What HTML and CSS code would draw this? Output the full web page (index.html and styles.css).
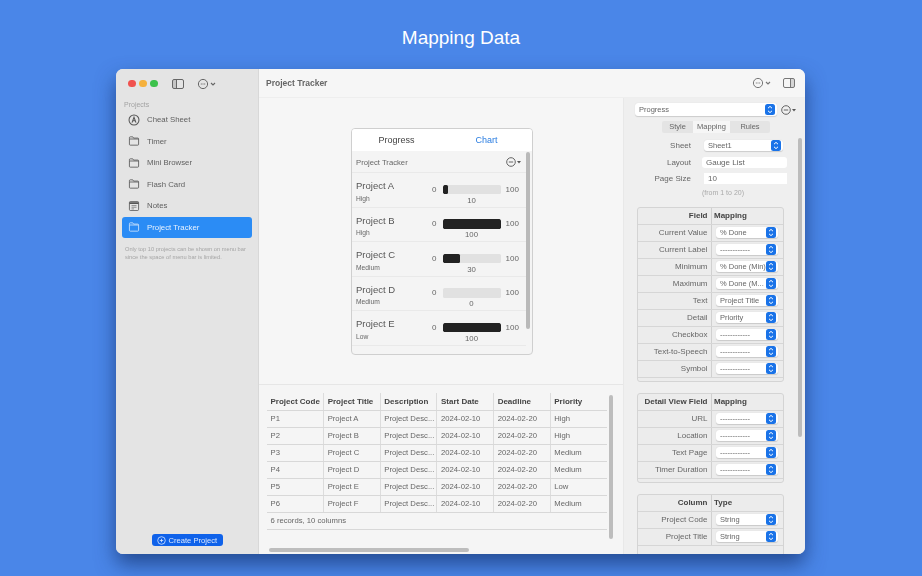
FILE: index.html
```html
<!DOCTYPE html>
<html lang="en">
<head>
<meta charset="utf-8">
<title>Mapping Data</title>
<link rel="stylesheet" href="styles.css">
</head>
<body>
<svg class="defs" width="0" height="0" aria-hidden="true">
  <symbol id="folder" viewBox="0 0 14 12"><path d="M1.500 3V2a1 1 0 0 1 1-1h3l1 1.500h5a1 1 0 0 1 1 1V10a1 1 0 0 1-1 1h-9a1 1 0 0 1-1-1z M1.500 3.600h11" fill="none" stroke="currentColor" stroke-width="1"/></symbol>
  <symbol id="more" viewBox="0 0 20 12"><circle cx="6" cy="6" r="4.600" fill="none" stroke="currentColor"/><path d="M3.800 6h4.400" stroke="currentColor" stroke-dasharray="1 .7"/><path d="M14 5l2 2 2-2" fill="none" stroke="currentColor" stroke-width="1.100"/></symbol>
  <symbol id="more-s" viewBox="0 0 16 10"><circle cx="5" cy="5" r="4.300" fill="none" stroke="currentColor" stroke-width=".9"/><path d="M2.800 5h4.400" stroke="currentColor" stroke-width=".9"/><path d="M11 4h4l-2 2.400z" fill="currentColor"/></symbol>
  <symbol id="updown" viewBox="0 0 10 11"><rect width="10" height="11" rx="2.500" fill="#1a73e8"/><path d="M3 4.200 5 2.400l2 1.800M3 6.800l2 1.800 2-1.800" fill="none" stroke="#fff" stroke-width="1"/></symbol>
</svg>

<h1 class="title">Mapping Data</h1>

<main class="window">
  <aside class="sidebar">
    <div class="traffic">
      <span class="light red"></span><span class="light yellow"></span><span class="light green"></span>
      <svg class="side-toggle" width="12" height="10" viewBox="0 0 12 10"><rect x=".5" y=".5" width="11" height="9" rx="1.500" fill="none" stroke="currentColor"/><path d="M4.500 .5v9" stroke="currentColor"/><path d="M1 1h3.500v8H1z" fill="currentColor" opacity=".25"/></svg>
      <svg class="side-more" width="20" height="12"><use href="#more"/></svg>
    </div>
    <div class="side-label">Projects</div>
    <nav class="side-list">
      <a class="side-item"><svg class="side-icon" width="12" height="12" viewBox="0 0 14 14"><circle cx="7" cy="7" r="5.800" fill="none" stroke="currentColor" stroke-width="1.200"/><path d="M4.700 10 7 3.800 9.300 10M5.500 8h3" fill="none" stroke="currentColor" stroke-width="1.200"/></svg>Cheat Sheet</a>
      <a class="side-item"><svg class="side-icon" width="12" height="10"><use href="#folder"/></svg>Timer</a>
      <a class="side-item"><svg class="side-icon" width="12" height="10"><use href="#folder"/></svg>Mini Browser</a>
      <a class="side-item"><svg class="side-icon" width="12" height="10"><use href="#folder"/></svg>Flash Card</a>
      <a class="side-item"><svg class="side-icon" width="12" height="10" viewBox="0 0 14 12"><rect x="1.500" y=".5" width="11" height="11" rx="1.500" fill="none" stroke="currentColor"/><path d="M1.500 2.500h11" stroke="currentColor" stroke-width="2"/><path d="M4 5.500h6M4 7.500h6M4 9.500h3" stroke="currentColor" stroke-width=".7"/></svg>Notes</a>
      <a class="side-item active"><svg class="side-icon" width="12" height="10"><use href="#folder"/></svg>Project Tracker</a>
    </nav>
    <p class="side-note">Only top 10 projects can be shown on menu bar since the space of menu bar is limited.</p>
    <button class="create"><svg width="9" height="9" viewBox="0 0 9 9"><circle cx="4.500" cy="4.500" r="3.800" fill="none" stroke="currentColor" stroke-width=".8"/><path d="M4.500 2.800v3.400M2.800 4.500h3.400" stroke="currentColor" stroke-width=".8"/></svg>Create Project</button>
  </aside>

  <div class="content">
    <header class="toolbar">
      <span class="doc-title">Project Tracker</span>
      <svg class="tool-more" width="20" height="12"><use href="#more"/></svg>
      <svg class="tool-panel" width="12" height="10" viewBox="0 0 12 10"><rect x=".5" y=".5" width="11" height="9" rx="1.500" fill="none" stroke="currentColor"/><path d="M7.500 .5v9" stroke="currentColor"/><path d="M8 1h3v8H8z" fill="currentColor" opacity=".25"/></svg>
    </header>

    <div class="panes">
      <section class="center">
        <div class="preview">
          <div class="widget">
            <div class="widget-tabs"><span class="wt-on">Progress</span><span class="wt-link">Chart</span></div>
            <div class="widget-head"><span>Project Tracker</span><svg width="16" height="10"><use href="#more-s"/></svg></div>
            <div class="gauge"><div class="g-text"><b>Project A</b><small>High</small></div><div class="g-meter"><span class="g-min">0</span><div class="g-bar"><i class="p10"></i></div><span class="g-max">100</span><span class="g-val">10</span></div></div>
            <div class="gauge"><div class="g-text"><b>Project B</b><small>High</small></div><div class="g-meter"><span class="g-min">0</span><div class="g-bar"><i class="p100"></i></div><span class="g-max">100</span><span class="g-val">100</span></div></div>
            <div class="gauge"><div class="g-text"><b>Project C</b><small>Medium</small></div><div class="g-meter"><span class="g-min">0</span><div class="g-bar"><i class="p30"></i></div><span class="g-max">100</span><span class="g-val">30</span></div></div>
            <div class="gauge"><div class="g-text"><b>Project D</b><small>Medium</small></div><div class="g-meter"><span class="g-min">0</span><div class="g-bar"></div><span class="g-max">100</span><span class="g-val">0</span></div></div>
            <div class="gauge"><div class="g-text"><b>Project E</b><small>Low</small></div><div class="g-meter"><span class="g-min">0</span><div class="g-bar"><i class="p100"></i></div><span class="g-max">100</span><span class="g-val">100</span></div></div>
            <span class="w-scroll"></span>
          </div>
        </div>
        <div class="sheet">
          <table class="data">
            <thead><tr><th>Project Code</th><th>Project Title</th><th>Description</th><th>Start Date</th><th>Deadline</th><th>Priority</th></tr></thead>
            <tbody>
              <tr><td>P1</td><td>Project A</td><td>Project Desc...</td><td>2024-02-10</td><td>2024-02-20</td><td>High</td></tr>
              <tr><td>P2</td><td>Project B</td><td>Project Desc...</td><td>2024-02-10</td><td>2024-02-20</td><td>High</td></tr>
              <tr><td>P3</td><td>Project C</td><td>Project Desc...</td><td>2024-02-10</td><td>2024-02-20</td><td>Medium</td></tr>
              <tr><td>P4</td><td>Project D</td><td>Project Desc...</td><td>2024-02-10</td><td>2024-02-20</td><td>Medium</td></tr>
              <tr><td>P5</td><td>Project E</td><td>Project Desc...</td><td>2024-02-10</td><td>2024-02-20</td><td>Low</td></tr>
              <tr><td>P6</td><td>Project F</td><td>Project Desc...</td><td>2024-02-10</td><td>2024-02-20</td><td>Medium</td></tr>
            </tbody>
            <tfoot><tr><td colspan="6">6 records, 10 columns</td></tr></tfoot>
          </table>
          <span class="v-scroll"></span>
          <span class="h-scroll"></span>
        </div>
      </section>

      <aside class="inspector">
        <div class="insp-top">
          <div class="popup wide"><span>Progress</span><svg width="10" height="11"><use href="#updown"/></svg></div>
          <svg width="16" height="10"><use href="#more-s"/></svg>
        </div>
        <div class="segments"><span>Style</span><span class="seg-on">Mapping</span><span>Rules</span></div>
        <div class="form">
          <div class="form-row"><label>Sheet</label><div class="popup"><span>Sheet1</span><svg width="10" height="11"><use href="#updown"/></svg></div></div>
          <div class="form-row"><label>Layout</label><div class="field">Gauge List</div></div>
          <div class="form-row"><label>Page Size</label><div class="field square">10</div></div>
          <div class="hint">(from 1 to 20)</div>
        </div>

        <div class="map">
          <div class="map-row head"><span>Field</span><span>Mapping</span></div>
          <div class="map-row"><span>Current Value</span><div class="popup"><span>% Done</span><svg width="10" height="11"><use href="#updown"/></svg></div></div>
          <div class="map-row"><span>Current Label</span><div class="popup"><span>------------</span><svg width="10" height="11"><use href="#updown"/></svg></div></div>
          <div class="map-row"><span>Minimum</span><div class="popup"><span>% Done (Min)</span><svg width="10" height="11"><use href="#updown"/></svg></div></div>
          <div class="map-row"><span>Maximum</span><div class="popup"><span>% Done (M...</span><svg width="10" height="11"><use href="#updown"/></svg></div></div>
          <div class="map-row"><span>Text</span><div class="popup"><span>Project Title</span><svg width="10" height="11"><use href="#updown"/></svg></div></div>
          <div class="map-row"><span>Detail</span><div class="popup"><span>Priority</span><svg width="10" height="11"><use href="#updown"/></svg></div></div>
          <div class="map-row"><span>Checkbox</span><div class="popup"><span>------------</span><svg width="10" height="11"><use href="#updown"/></svg></div></div>
          <div class="map-row"><span>Text-to-Speech</span><div class="popup"><span>------------</span><svg width="10" height="11"><use href="#updown"/></svg></div></div>
          <div class="map-row"><span>Symbol</span><div class="popup"><span>------------</span><svg width="10" height="11"><use href="#updown"/></svg></div></div>
          <div class="map-end"></div>
        </div>

        <div class="map">
          <div class="map-row head"><span>Detail View Field</span><span>Mapping</span></div>
          <div class="map-row"><span>URL</span><div class="popup"><span>------------</span><svg width="10" height="11"><use href="#updown"/></svg></div></div>
          <div class="map-row"><span>Location</span><div class="popup"><span>------------</span><svg width="10" height="11"><use href="#updown"/></svg></div></div>
          <div class="map-row"><span>Text Page</span><div class="popup"><span>------------</span><svg width="10" height="11"><use href="#updown"/></svg></div></div>
          <div class="map-row"><span>Timer Duration</span><div class="popup"><span>------------</span><svg width="10" height="11"><use href="#updown"/></svg></div></div>
          <div class="map-end"></div>
        </div>

        <div class="map">
          <div class="map-row head"><span>Column</span><span>Type</span></div>
          <div class="map-row"><span>Project Code</span><div class="popup"><span>String</span><svg width="10" height="11"><use href="#updown"/></svg></div></div>
          <div class="map-row"><span>Project Title</span><div class="popup"><span>String</span><svg width="10" height="11"><use href="#updown"/></svg></div></div>
          <div class="map-row"></div>
        </div>
        <span class="i-scroll"></span>
      </aside>
    </div>
  </div>
</main>
</body>
</html>
```

FILE: styles.css
```css
* { box-sizing: border-box; }
html, body { margin: 0; height: 100%; }
body {
  width: 922px; height: 576px; overflow: hidden;
  background: #4a86e8;
  font-family: "Liberation Sans", Arial, sans-serif;
  color: #555;
  padding-left: 116px;
}
.defs { position: absolute; }
.title {
  margin: 27px 0 0 -116px; height: 42px;
  font-size: 19px; font-weight: 400; line-height: 21px; color: #fff;
  text-align: center;
}
.window {
  width: 689px; height: 485px;
  display: flex; overflow: hidden;
  border-radius: 7px;
  background: #f5f5f5;
  box-shadow: 0 10px 20px rgba(20, 50, 110, .7);
  filter: blur(.45px);
}

/* sidebar */
.sidebar {
  width: 143px; flex: none;
  background: #e4e4e4;
  border-right: 1px solid #d8d8d8;
  padding: 0 6px;
  display: flex; flex-direction: column;
}
.traffic { height: 29px; display: flex; align-items: center; padding-left: 6px; color: #666; }
.light { width: 7.500px; height: 7.500px; border-radius: 50%; margin-right: 3.500px; flex: none; }
.red { background: #f0524f; }
.yellow { background: #f5b13d; }
.green { background: #3cc14b; }
.side-toggle { margin-left: 11px; }
.side-more { margin-left: 13px; }
.side-label { font-size: 7px; line-height: 9px; color: #a3a3a3; margin: 2px 0 0 2px; height: 9px; }
.side-list { display: flex; flex-direction: column; }
.side-item {
  height: 21.500px; display: flex; align-items: center;
  padding-left: 6px; gap: 7px;
  font-size: 7.800px; color: #5f5f5f; border-radius: 3px;
}
.side-icon { flex: none; color: #555; }
.side-item.active { background: #2b8cf5; color: #e8f2ff; }
.side-item.active .side-icon { color: #cfe4fd; }
.side-note {
  margin: 8px 2px 0 3px; font-size: 5.700px; line-height: 7.500px; color: #a5a5a5;
}
.create {
  margin: auto auto 8px; width: 71px; height: 12px; padding: 0 0 0 5px;
  border: 0; border-radius: 3px;
  background: #0f62ea; color: #dbe8ff;
  font: 7.600px "Liberation Sans", Arial, sans-serif;
  display: flex; align-items: center; gap: 3px;
}

/* content */
.content { flex: 1; min-width: 0; display: flex; flex-direction: column; }
.toolbar {
  height: 29px; flex: none; background: #f6f6f6; border-bottom: 1px solid #eeeeee;
  display: flex; align-items: center; padding: 0 10px 0 7px; color: #777;
}
.doc-title { font-size: 8.500px; font-weight: 700; color: #666; }
.tool-more { margin-left: auto; }
.tool-panel { margin-left: 11px; }
.panes { flex: 1; display: flex; min-height: 0; }
.center { width: 365px; flex: none; display: flex; flex-direction: column; border-right: 1px solid #e8e8e8; background: #f6f6f6; }
.preview { height: 287px; flex: none; border-bottom: 1px solid #e6e6e6; display: flex; justify-content: center; padding: 30px 0 0 2px; }

/* widget */
.widget {
  position: relative; width: 182px; height: 227px;
  background: #f4f4f4; border: 1px solid #cfcfcf; border-radius: 4px; overflow: hidden;
}
.widget-tabs { height: 22px; background: #fff; display: flex; align-items: center; font-size: 9px; }
.widget-tabs span { flex: 1; text-align: center; padding-right: 1px; }
.wt-on { color: #444; }
.wt-link { color: #2a7de1; padding-right: 0; }
.widget-head { height: 22px; padding: 1px 4px 0 4px; margin-right: 6px; display: flex; align-items: center; justify-content: space-between; font-size: 7.700px; color: #666; border-bottom: 1px solid #e9e9e9; }
.widget-head svg { color: #555; }
.gauge { height: 34.500px; display: flex; padding: 0 8px 0 4px; border-bottom: 1px solid #e9e9e9; width: 174px; }
.g-text { width: 70px; flex: none; display: flex; flex-direction: column; padding-top: 7px; }
.g-text b { font-weight: 400; font-size: 9.500px; line-height: 11px; color: #555; }
.g-text small { font-size: 6.700px; line-height: 10px; margin-top: 2.500px; color: #666; }
.g-meter {
  flex: 1; display: grid; grid-template-columns: 16.500px 58px 1fr; grid-template-rows: 12px 10px;
  padding-top: 10.500px; font-size: 8px; color: #666; line-height: 11px;
}
.g-min { text-align: center; }
.g-max { padding-left: 5px; white-space: nowrap; }
.g-val { grid-column: 2; text-align: center; font-size: 7.800px; line-height: 10px; }
.g-bar { height: 9.500px; margin-top: 1px; background: #e1e1e1; border-radius: 1.500px; overflow: hidden; }
.g-bar i { display: block; height: 100%; background: #222; border-radius: 1.500px; }
.p10 { width: 10%; }
.p30 { width: 30%; }
.p100 { width: 100%; }
.w-scroll { position: absolute; right: 2px; top: 23px; width: 4px; height: 177px; border-radius: 2px; background: #b9b9b9; }

/* sheet */
.sheet { flex: 1; position: relative; padding: 8px 0 0 8px; background: #f5f5f5; }
.data { border-collapse: collapse; table-layout: fixed; width: 340px; font-size: 7.700px; color: #666; }
.data th, .data td { height: 17px; padding: 0 3.500px; border-bottom: 1px solid #d8d8d8; border-right: 1px solid #dcdcdc; text-align: left; white-space: nowrap; overflow: hidden; font-weight: 400; }
.data th { font-weight: 700; color: #444; font-size: 8px; }
.data th:last-child, .data td:last-child { border-right: 0; }
.data tfoot td { border-right: 0; }
.v-scroll { position: absolute; left: 350px; top: 10px; width: 4px; height: 144px; border-radius: 2px; background: #bdbdbd; }
.h-scroll { position: absolute; left: 10px; top: 163px; width: 200px; height: 4px; border-radius: 2px; background: #bdbdbd; }

/* inspector */
.inspector { flex: 1; position: relative; min-width: 0; overflow: hidden; background: #efefef; padding: 5px 0 0 11px; font-size: 8px; }
.insp-top { display: flex; align-items: center; gap: 4px; color: #555; }
.popup {
  display: flex; align-items: center; justify-content: space-between;
  height: 13px; padding: 0 2px 0 4px; background: #fff; border-radius: 3px; color: #666; font-size: 7.500px;
  box-shadow: 0 .5px 1px rgba(0,0,0,.15); white-space: nowrap;
}
.popup.wide { width: 142px; }
.segments { display: grid; grid-template-columns: 31px 37px 40px; width: 108px; margin: 5px 0 0 27px; height: 12px; line-height: 12px; background: #e4e4e4; border-radius: 2px; font-size: 7.500px; color: #666; text-align: center; }
.seg-on { background: #f6f6f6; }
.form { margin-top: 4px; }
.form-row { display: flex; align-items: center; height: 16.700px; }
.form-row label { width: 56px; text-align: right; flex: none; color: #666; }
.form-row .popup { width: 79px; margin-left: 13px; height: 11px; }
.field { margin-left: 11px; width: 85px; height: 11px; line-height: 11px; background: #fff; border-radius: 3px; padding-left: 4px; color: #666; }
.field.square { margin-left: 13px; width: 83px; border-radius: 0; }
.hint { font-size: 7px; line-height: 9px; color: #aaa; margin: 1px 0 0 67px; }
.map { width: 147px; margin: 0 0 11px 2px; border: 1px solid #d4d4d4; border-radius: 3px; background: #ececec; overflow: hidden; }
.form + .map { margin-top: 9.500px; }
.map-row { display: grid; grid-template-columns: 74px 1fr; height: 17px; border-bottom: 1px solid #d6d6d6; align-items: center; font-size: 8px; color: #666; }
.map-row > span:first-child { text-align: right; padding-right: 3.500px; line-height: 16px; border-right: 1px solid #d0d0d0; height: 16px; white-space: nowrap; }
.map-row .popup { width: 62px; margin-left: 4px; height: 11px; }
.map-row .popup svg { flex: none; }
.map-row.head { font-weight: 700; color: #444; }
.map-row.head span + span { padding-left: 2px; }
.map-end { height: 3px; }
.i-scroll { position: absolute; left: 174px; top: 40px; width: 4px; height: 299px; border-radius: 2px; background: #bcbcbc; }
```
